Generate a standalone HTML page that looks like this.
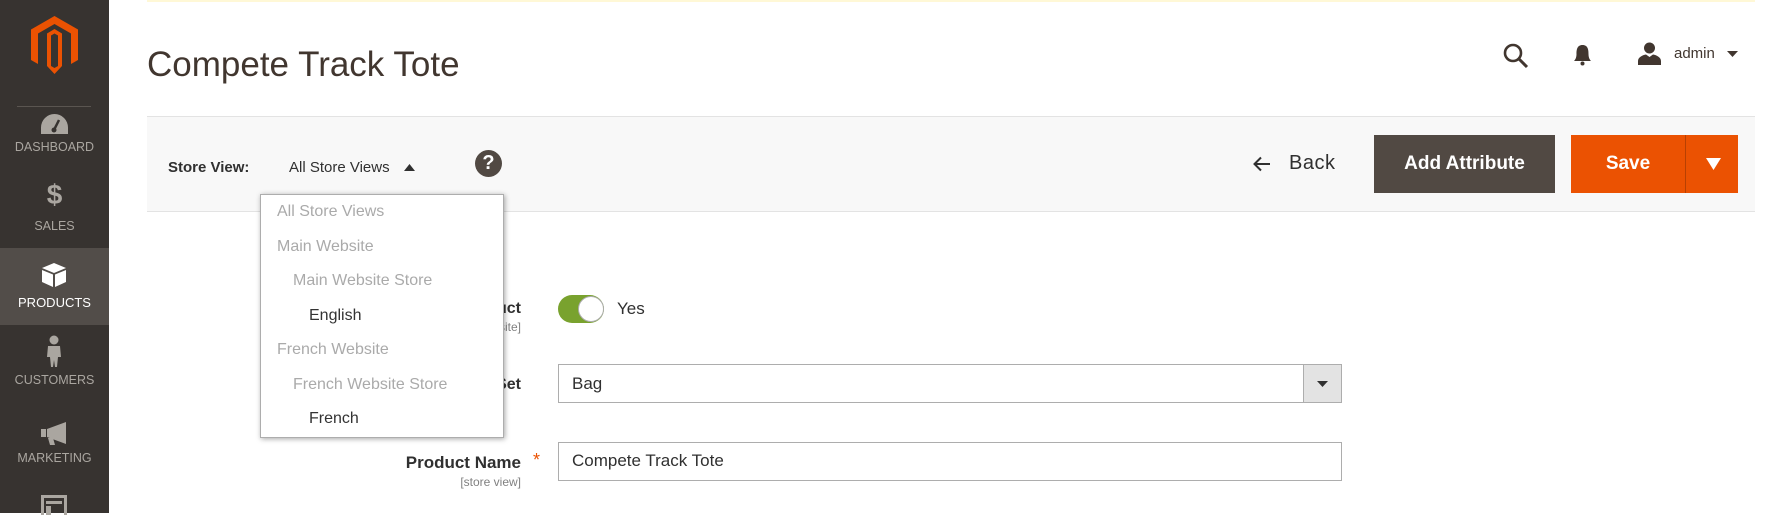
<!DOCTYPE html>
<html><head><meta charset="utf-8"><style>
*{margin:0;padding:0;box-sizing:border-box}
body{width:1791px;height:513px;overflow:hidden;background:#fff;font-family:"Liberation Sans",sans-serif;color:#303030;position:relative}
.abs{position:absolute}
#side{left:0;top:0;width:109px;height:513px;background:#373330}
.nav{position:absolute;left:0;width:109px;text-align:center;color:#aaa6a0;font-size:12.5px}
.dd div{position:absolute;font-size:16px;white-space:nowrap}
.g{color:#aaa}
.k{color:#333}
.lbl{position:absolute;right:1270px;font-weight:bold;font-size:16px;color:#303030;text-align:right}
.sub{position:absolute;right:1270px;font-size:12px;color:#808080}
</style></head><body>
<div id="side" class="abs">
 <svg class="abs" style="left:31px;top:16px" width="47" height="58" viewBox="0 0 47 58"><path d="M23.5 0 L47 13.5 V44 L40 48 V17.5 L23.5 8 L7 17.5 V48 L0 44 V13.5 Z M23.5 13 L31 17.5 V50 L23.5 58 L16 50 V17.5 Z M20 19.5 V50 L23.5 52 L27 50 V19.5 L23.5 17.5 Z" fill="#eb5202" fill-rule="evenodd"/></svg>
 <div class="abs" style="left:17px;top:106px;width:74px;height:1px;background:#5a5550"></div>
 <svg class="abs" style="left:40px;top:113px" width="29" height="22" viewBox="0 0 29 22"><path d="M14.5 1 A13.5 13.5 0 0 0 1 14.5 V21 H28 V14.5 A13.5 13.5 0 0 0 14.5 1 Z" fill="#aaa6a0"/><path d="M14 17 L19 7" stroke="#373330" stroke-width="2.5"/><circle cx="14" cy="17" r="2.5" fill="#373330"/></svg>
 <div class="nav" style="top:140px">DASHBOARD</div>
 <div class="nav" style="top:180px;font-size:28px;font-weight:bold;line-height:30px">$</div>
 <div class="nav" style="top:219px">SALES</div>
 <div class="abs" style="left:0;top:248px;width:109px;height:77px;background:#524d49"></div>
 <svg class="abs" style="left:41px;top:262px" width="26" height="26" viewBox="0 0 26 26"><path d="M13 1 L25 6 L13 11 L1 6 Z" fill="#fff"/><path d="M1 8 L12 12.5 V25 L1 20 Z M25 8 L14 12.5 V25 L25 20 Z" fill="#fff"/></svg>
 <div class="nav" style="top:295px;color:#fff;font-size:13px">PRODUCTS</div>
 <svg class="abs" style="left:44px;top:335px" width="20" height="33" viewBox="0 0 20 33"><circle cx="10" cy="5" r="4.5" fill="#aaa6a0"/><path d="M4 11 H16 L17 22 H14 L13 32 H11 L10 25 L9 32 H7 L6 22 H3 Z" fill="#aaa6a0"/></svg>
 <div class="nav" style="top:373px">CUSTOMERS</div>
 <svg class="abs" style="left:40px;top:421px" width="29" height="24" viewBox="0 0 29 24"><path d="M1 8 H6 V16 H1 Z M7 8 L26 1 V23 L7 16 Z M8 17 H13 L15 24 H10 Z" fill="#aaa6a0"/></svg>
 <div class="nav" style="top:451px">MARKETING</div>
 <svg class="abs" style="left:41px;top:495px" width="26" height="20" viewBox="0 0 26 20"><rect x="1.5" y="1.5" width="23" height="20" fill="none" stroke="#aaa6a0" stroke-width="3"/><rect x="5" y="6" width="16" height="3" fill="#aaa6a0"/><rect x="5" y="11" width="5" height="9" fill="#aaa6a0"/></svg>
</div>

<div class="abs" style="left:147px;top:0;width:1608px;height:2px;background:#fff8d6"></div>
<div class="abs" style="left:147px;top:45px;font-size:35px;color:#41362f;white-space:nowrap;line-height:40px">Compete Track Tote</div>

<svg class="abs" style="left:1503px;top:43px" width="26" height="26" viewBox="0 0 26 26"><circle cx="10" cy="10" r="8" fill="none" stroke="#41362f" stroke-width="2.6"/><path d="M16 16 L24 24" stroke="#41362f" stroke-width="3"/></svg>
<svg class="abs" style="left:1573px;top:44px" width="19" height="22" viewBox="0 0 19 22"><path d="M9.5 1 C4 1 3.5 6 3.5 10 C3.5 14 2 16 1 17 H18 C17 16 15.5 14 15.5 10 C15.5 6 15 1 9.5 1 Z" fill="#41362f"/><circle cx="9.5" cy="19.5" r="2" fill="#41362f"/></svg>
<svg class="abs" style="left:1638px;top:42px" width="23" height="23" viewBox="0 0 23 23"><circle cx="11.5" cy="6" r="5.5" fill="#41362f"/><path d="M0 23 V19 C0 15 5 13 8 12.5 L11.5 15 L15 12.5 C18 13 23 15 23 19 V23 Z" fill="#41362f"/></svg>
<div class="abs" style="left:1674px;top:45px;font-size:15px;color:#41362f">admin</div>
<svg class="abs" style="left:1727px;top:51px" width="11" height="7"><path d="M0 0 H11 L5.5 6 Z" fill="#41362f"/></svg>

<div class="abs" style="left:147px;top:116px;width:1608px;height:96px;background:#f8f8f8;border-top:1px solid #e3e3e3;border-bottom:1px solid #e3e3e3"></div>
<div class="abs" style="left:168px;top:159px;font-size:15px;font-weight:bold;color:#303030">Store View:</div>
<div class="abs" style="left:289px;top:159px;font-size:15px;color:#303030">All Store Views</div>
<svg class="abs" style="left:404px;top:164px" width="11" height="7"><path d="M0 7 H11 L5.5 0 Z" fill="#303030"/></svg>
<div class="abs" style="left:475px;top:150px;width:27px;height:27px;border-radius:50%;background:#514943;color:#fff;font-weight:bold;font-size:20px;text-align:center;line-height:27px">?</div>

<svg class="abs" style="left:1253px;top:156px" width="18" height="16" viewBox="0 0 18 16"><path d="M17 8 H2 M8 1.5 L1.5 8 L8 14.5" fill="none" stroke="#303030" stroke-width="2"/></svg>
<div class="abs" style="left:1289px;top:152px;font-size:20px;color:#303030;letter-spacing:0.5px">Back</div>
<div class="abs" style="left:1374px;top:135px;width:181px;height:58px;background:#514943;color:#fff;font-weight:bold;font-size:19px;text-align:center;line-height:58px">Add Attribute</div>
<div class="abs" style="left:1571px;top:135px;width:167px;height:58px;background:#eb5202"></div>
<div class="abs" style="left:1571px;top:135px;width:114px;height:58px;color:#fff;font-weight:bold;font-size:19px;text-align:center;line-height:58px">Save</div>
<div class="abs" style="left:1685px;top:135px;width:1px;height:58px;background:#b84002"></div>
<svg class="abs" style="left:1706px;top:158px" width="15" height="12"><path d="M0 0 H15 L7.5 12 Z" fill="#fff"/></svg>

<div class="lbl" style="top:300px">Enable Product</div>
<div class="sub" style="top:320px">[website]</div>
<div class="abs" style="left:558px;top:295px;width:46px;height:28px;border-radius:14px;background:#79a22e"></div>
<div class="abs" style="left:578px;top:296px;width:26px;height:26px;border-radius:50%;background:#fff;border:1px solid #adadad"></div>
<div class="abs" style="left:617px;top:299px;font-size:17px;color:#303030">Yes</div>

<div class="lbl" style="top:376px">Attribute Set</div>
<div class="abs" style="left:558px;top:364px;width:784px;height:39px;border:1px solid #adadad;background:#fff"></div>
<div class="abs" style="left:1303px;top:364px;width:39px;height:39px;border:1px solid #adadad;background:#e3e3e3"></div>
<svg class="abs" style="left:1317px;top:381px" width="11" height="6"><path d="M0 0 H11 L5.5 6 Z" fill="#303030"/></svg>
<div class="abs" style="left:572px;top:374px;font-size:17px;color:#303030">Bag</div>

<div class="lbl" style="top:453px;font-size:17px">Product Name</div>
<div class="abs" style="left:533px;top:450px;color:#eb5202;font-size:18px">*</div>
<div class="sub" style="top:475px">[store view]</div>
<div class="abs" style="left:558px;top:442px;width:784px;height:39px;border:1px solid #adadad;background:#fff"></div>
<div class="abs" style="left:572px;top:451px;font-size:17px;color:#303030">Compete Track Tote</div>

<div class="abs dd" style="left:260px;top:194px;width:244px;height:244px;background:#fff;border:1px solid #adadad;box-shadow:1px 1px 5px rgba(0,0,0,.35)">
 <div class="g" style="left:16px;top:8px">All Store Views</div>
 <div class="g" style="left:16px;top:43px">Main Website</div>
 <div class="g" style="left:32px;top:77px">Main Website Store</div>
 <div class="k" style="left:48px;top:112px">English</div>
 <div class="g" style="left:16px;top:146px">French Website</div>
 <div class="g" style="left:32px;top:181px">French Website Store</div>
 <div class="k" style="left:48px;top:215px">French</div>
</div>
</body></html>
